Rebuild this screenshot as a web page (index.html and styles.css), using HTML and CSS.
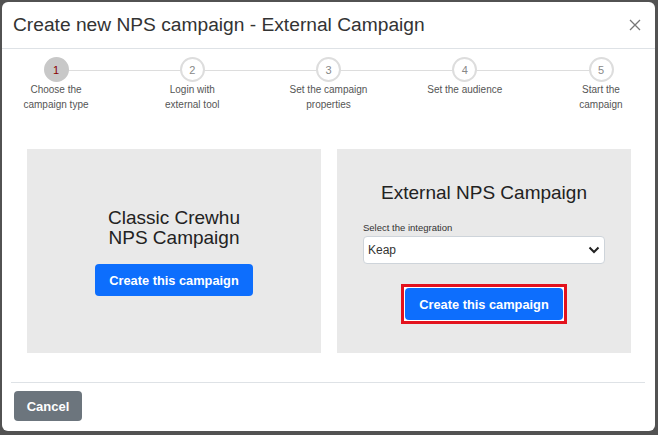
FILE: index.html
```html
<!DOCTYPE html>
<html lang="en">
<head>
  <meta charset="UTF-8">
  <title>Create new NPS campaign</title>
  <link rel="stylesheet" href="styles.css">
</head>
<body>

  <div class="modal">
    <!-- Header -->
    <div class="modal-header">
      <h5 class="modal-title">Create new NPS campaign - External Campaign</h5>
      <button class="close" aria-label="Close">
        <svg width="12" height="12" viewBox="0 0 12 12"><path d="M1 1L11 11M11 1L1 11" stroke="#777" stroke-width="1.3" fill="none"/></svg>
      </button>
    </div>

    <!-- Body -->
    <div class="modal-body">
      <div class="stepper">
        <div class="stepper-line"></div>
        <div class="step active">
          <div class="step-circle">1</div>
          <div class="step-label">Choose the<br>campaign type</div>
        </div>
        <div class="step">
          <div class="step-circle">2</div>
          <div class="step-label">Login with<br>external tool</div>
        </div>
        <div class="step">
          <div class="step-circle">3</div>
          <div class="step-label">Set the campaign<br>properties</div>
        </div>
        <div class="step">
          <div class="step-circle">4</div>
          <div class="step-label">Set the audience</div>
        </div>
        <div class="step">
          <div class="step-circle">5</div>
          <div class="step-label">Start the<br>campaign</div>
        </div>
      </div>

      <div class="cards">
        <div class="card card-classic">
          <h3 class="card-title">Classic Crewhu<br>NPS Campaign</h3>
          <button class="btn btn-primary">Create this campaign</button>
        </div>
        <div class="card card-external">
          <h3 class="card-title">External NPS Campaign</h3>
          <div class="form-group">
            <label class="form-label">Select the integration</label>
            <div class="select-wrap">
              <select class="form-select">
                <option>Keap</option>
              </select>
              <svg class="select-arrow" width="12" height="8" viewBox="0 0 12 8"><path d="M1.5 1.5L6 6L10.5 1.5" stroke="#222" stroke-width="2" fill="none"/></svg>
            </div>
          </div>
          <span class="focus-ring">
            <button class="btn btn-primary">Create this campaign</button>
          </span>
        </div>
      </div>
    </div>

    <!-- Footer -->
    <div class="modal-footer">
      <button class="btn btn-secondary">Cancel</button>
    </div>
  </div>

</body>
</html>
```

FILE: styles.css
```css
html, body { margin: 0; height: 100%; }
body { background-color: #525252; font-family: "Liberation Sans", Arial, sans-serif; color: #333; }

.modal {
  box-sizing: border-box; width: 653px; height: 429px; margin: 2px 0 0 2px;
  background: #fff; border-radius: 6px; display: flex; flex-direction: column;
}

.modal-header {
  display: flex; align-items: center; justify-content: space-between;
  height: 46px; padding: 0 14px 0 11px; border-bottom: 1px solid #dee2e6;
}
.modal-title { margin: 0; font-size: 19.2px; font-weight: normal; color: #333; }
.close { background: none; border: none; padding: 0; width: 12px; height: 12px; cursor: pointer; display: flex; }

.modal-body { flex: 1; padding: 8px 9px 0 9px; }

.stepper { position: relative; display: flex; justify-content: space-between; height: 62px; }
.stepper-line { position: absolute; left: 45px; right: 45px; top: 13px; height: 1px; background: #ddd; }
.step { position: relative; width: 90px; display: flex; flex-direction: column; align-items: center; }
.step-circle {
  box-sizing: border-box; width: 25px; height: 25px; border-radius: 50%;
  border: 2px solid #ddd; background: #fff; color: #888;
  font-size: 11px; display: flex; align-items: center; justify-content: center;
}
.step.active .step-circle { background: #c8c8c8; border-color: #c8c8c8; color: #800; }
.step-label { margin-top: 0; font-size: 10px; line-height: 15px; color: #555; text-align: center; white-space: nowrap; }

.cards { display: grid; grid-template-columns: 1fr 1fr; gap: 16px; margin: 30px 15px 0 16px; }
.card {
  height: 204px; background: #e9e9e9;
  display: flex; flex-direction: column; align-items: center; box-sizing: border-box;
}
.card-title { margin: 0; font-size: 19px; font-weight: normal; line-height: 20px; color: #222; text-align: center; }
.card-classic { justify-content: center; padding-top: 2px; }
.card-classic .card-title { margin-bottom: 16px; }
.card-external { padding: 34px 26px 0 26px; }
.card-external .card-title { margin-bottom: 19px; }

.form-group { align-self: stretch; }
.form-label { display: block; font-size: 9.5px; color: #333; margin-bottom: 3px; }
.select-wrap { position: relative; }
.form-select {
  appearance: none; -webkit-appearance: none; width: 100%; height: 28px; box-sizing: border-box;
  padding: 0 24px 0 4px; font-family: inherit; font-size: 12px; color: #333;
  background: #fff; border: 1px solid #ced4da; border-radius: 4px;
}
.select-arrow { position: absolute; right: 5px; top: 10px; pointer-events: none; }

.btn {
  border: none; border-radius: 4px; cursor: pointer; font-family: inherit;
  font-weight: bold; color: #fff; font-size: 12.8px;
}
.btn-primary { background: #0d6efd; width: 158px; height: 32px; display: block; }
.focus-ring { display: block; margin-top: 20px; border: 3px solid #e3121d; padding: 1px; background: #fff; }
.btn-secondary { background: #6c757d; width: 68px; height: 30px; font-size: 13px; }

.modal-footer { margin: 0 10px 0 9px; padding: 8px 0 10px 3px; border-top: 1px solid #dee2e6; }
```
